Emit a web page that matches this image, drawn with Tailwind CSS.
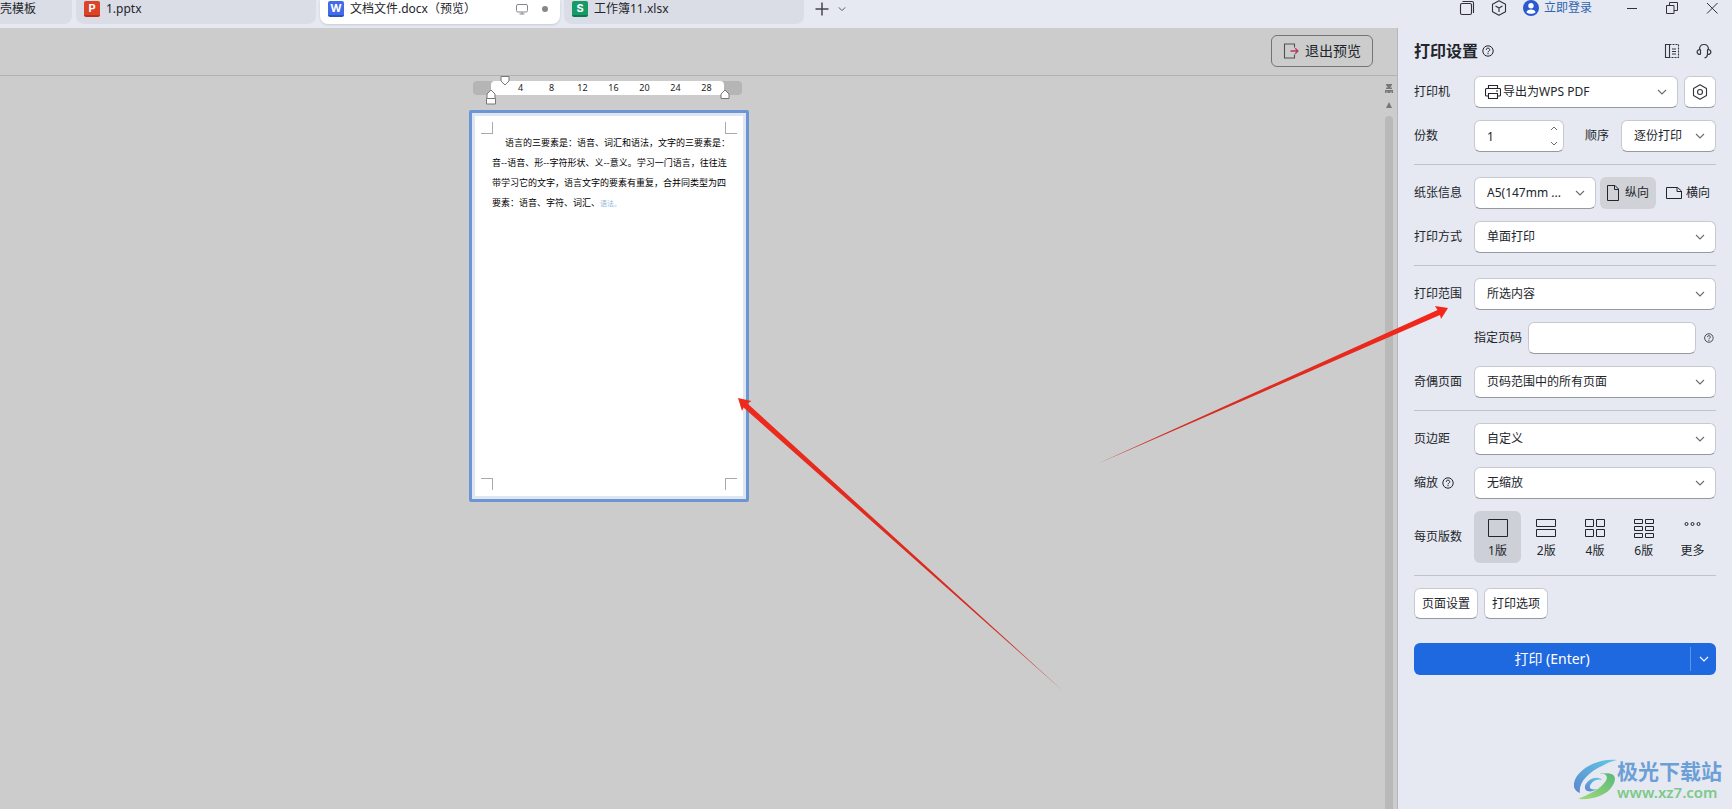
<!DOCTYPE html>
<html lang="zh-CN">
<head>
<meta charset="utf-8">
<meta name="viewport" content="width=device-width, initial-scale=1">
<title>打印预览</title>
<script src="https://cdn.jsdelivr.net/npm/@tailwindcss/browser@4"></script>
</head>
<body class="relative flex h-screen flex-col overflow-hidden bg-[#e6e9f1] font-['Noto_Sans','Noto_Sans_CJK_SC',sans-serif] text-xs text-[#22252b]">

<svg class="hidden">
  <symbol id="chev" viewBox="0 0 10 6"><path d="M1 1l4 4 4-4" fill="none" stroke="currentColor" stroke-width="1.1"/></symbol>
  <symbol id="help" viewBox="0 0 12 12"><circle cx="6" cy="6" r="5.2" fill="none" stroke="currentColor"/><path d="M4.300 4.800a1.700 1.700 0 1 1 2.500 1.500c-.6.3-.8.6-.8 1.100" fill="none" stroke="currentColor"/><path d="M5.400 8.200h1.200v1.100H5.400z" fill="currentColor"/></symbol>
</svg>

<header class="flex h-7 shrink-0 items-start justify-between">
  <nav class="flex gap-1" aria-label="文档标签">
    <a href="#" class="flex h-6 w-[72px] items-center rounded-br-lg bg-[#dadde5] pb-1.5 whitespace-nowrap">壳模板</a>
    <a href="#" class="flex h-6 w-60 items-center gap-1.5 rounded-b-lg bg-[#dadde5] pb-1.5 pl-2">
      <span class="flex size-4 items-center justify-center rounded-xs border-b-2 border-[#b8331b] bg-[#dc4327] font-['Inter',sans-serif] text-[11px] font-bold text-white">P</span>1.pptx</a>
    <a href="#" class="flex h-6 w-60 items-center gap-1.5 rounded-b-lg bg-white pr-3 pb-1.5 pl-2 shadow-sm">
      <span class="flex size-4 items-center justify-center rounded-xs border-b-2 border-[#2b52c4] bg-[#416be8] font-['Inter',sans-serif] text-[11px] font-bold text-white">W</span>
      <span class="grow whitespace-nowrap">文档文件.docx（预览）</span>
      <svg class="mr-2 h-3 w-3" viewBox="0 0 12 12" fill="none" stroke="#85878c"><rect x=".5" y="1.5" width="11" height="7.5" rx="1.5"/><path d="M3.500 11h5M6 9v2"/></svg>
      <span class="size-1.5 rounded-full bg-[#85878c]"></span></a>
    <a href="#" class="flex h-6 w-60 items-center gap-1.5 rounded-b-lg bg-[#dadde5] pb-1.5 pl-2">
      <span class="flex size-4 items-center justify-center rounded-xs border-b-2 border-[#0c7a4f] bg-[#169a68] font-['Inter',sans-serif] text-[11px] font-bold text-white">S</span>工作簿11.xlsx</a>
    <div class="flex h-[18px] items-center gap-2 pl-1.5">
      <button aria-label="新建"><svg class="size-4" viewBox="0 0 16 16" stroke="#44464b" stroke-width="1.5"><path d="M8 1.500v13M1.500 8h13"/></svg></button>
      <button aria-label="标签列表"><svg class="h-1.5 w-2 text-[#44464b]"><use href="#chev"/></svg></button>
    </div>
  </nav>
  <div class="flex h-4 items-center pr-3 text-[#303238]">
    <button class="mr-4" aria-label="窗口"><svg class="size-4" viewBox="0 0 16 16" fill="none" stroke="currentColor" stroke-width="1.1"><rect x="1.5" y="3.5" width="11" height="11" rx="1.5"/><path d="M3.500 1.500H13a1.500 1.500 0 0 1 1.500 1.500V13"/></svg></button>
    <button class="mr-4" aria-label="应用"><svg class="size-4" viewBox="0 0 16 16" fill="none" stroke="currentColor" stroke-width="1.1" stroke-linejoin="round"><path d="M8 .8l6.500 3.500v7.500L8 15.300l-6.500-3.500V4.300zM4.500 6L8 8l3.500-2M8 8v4"/></svg></button>
    <button class="mr-7 flex items-center gap-[5px] whitespace-nowrap text-[#2f66b0]">
      <svg class="size-4" viewBox="0 0 16 16"><circle cx="8" cy="8" r="8" fill="#2a58cf"/><circle cx="8" cy="5.800" r="2.700" fill="#fff"/><path d="M3.500 12.500c0-2 2-3 4.500-3s4.500 1 4.500 3c-2.500 1.800-6.500 1.800-9 0z" fill="#fff"/></svg>立即登录</button>
    <button class="mr-6 ml-1" aria-label="最小化"><svg class="size-4" viewBox="0 0 16 16" stroke="currentColor"><path d="M3 8.500h10"/></svg></button>
    <button class="mr-6" aria-label="还原"><svg class="size-4" viewBox="0 0 16 16" fill="none" stroke="currentColor"><path d="M2.500 5.500h7.500v8H2.500zM5.500 5.500v-3h8v8H10"/></svg></button>
    <button aria-label="关闭"><svg class="size-4" viewBox="0 0 16 16" fill="none" stroke="currentColor"><path d="M3 3l10.500 10.500M13.500 3L3 13.500"/></svg></button>
  </div>
</header>

<div class="flex min-h-0 grow">
  <main class="flex min-w-0 grow flex-col border-r border-[#b4b7bd] bg-[#ccc]">
    <div class="flex h-12 shrink-0 items-center justify-end border-b border-[#b2b2b2] pr-6 pb-1">
      <button class="mt-0.5 flex h-8 w-[102px] items-center justify-center gap-1.5 rounded-md border border-[#737476] text-sm whitespace-nowrap">
        <svg class="size-4" viewBox="0 0 16 16" fill="none" stroke-width="1.100"><path d="M11.500 4.500v-3.500h-10v14h10v-3.500" stroke="#4b5350"/><path d="M7.500 8h7.500M12.200 5.200L15 8l-2.800 2.800" stroke="#b83a5e" stroke-width="1.300"/></svg>退出预览</button>
    </div>
    <div class="flex min-h-0 grow">
      <div class="grow pt-[5px] pl-[469px]">
        <!-- 标尺 -->
        <div class="relative ml-1 flex h-3.5 w-[269px] rounded-sm bg-[#b5b5b5] px-[18px]">
          <div class="flex grow items-center rounded-sm bg-white pb-px pl-[14px] text-[9px] leading-none text-[#222]">
            <span class="w-[31px] text-center">4</span><span class="w-[31px] text-center">8</span><span class="w-[31px] text-center">12</span><span class="w-[31px] text-center">16</span><span class="w-[31px] text-center">20</span><span class="w-[31px] text-center">24</span><span class="w-[31px] text-center">28</span>
          </div>
          <svg class="absolute -top-[5px] left-[27px] h-2.5 w-2.5" viewBox="0 0 10 10" fill="#fff" stroke="#777"><path d="M1 .5h8v4.500L5 9 1 5z"/></svg>
          <svg class="absolute top-2 left-[13px] h-4 w-2.5" viewBox="0 0 10 16" fill="#fff" stroke="#777"><path d="M5 1l4 4v4.500H1V5zM.500 9.500h9v5.500h-9z"/></svg>
          <svg class="absolute top-2 left-[247px] h-2.5 w-2.5" viewBox="0 0 10 10" fill="#fff" stroke="#777"><path d="M5 1l4 4v4.500H1V5z"/></svg>
        </div>
        <!-- 页面 -->
        <article class="mt-[15px] flex h-[392px] w-[280px] flex-col justify-between rounded-xs border-3 border-[#6c95d6] bg-white p-[9px] ring-3 ring-[#e0e6f0] ring-inset">
          <div class="flex justify-between">
            <i class="h-3 w-3 border-r border-b border-[#aaa]"></i><i class="h-3 w-3 border-b border-l border-[#aaa]"></i>
          </div>
          <p class="-mt-px mb-auto ml-[11px] indent-[13px] font-['Noto_Sans_CJK_SC',sans-serif] text-[9px] leading-5 whitespace-nowrap text-black">语言的三要素是：语音、词汇和语法，文字的三要素是：<br>音--语音、形--字符形状、义--意义。学习一门语言，往往连<br>带学习它的文字，语言文字的要素有重复，合并同类型为四<br>要素：语音、字符、词汇、<span class="text-[7px] text-[#8fb8da]">语法。</span></p>
          <div class="flex justify-between">
            <i class="h-3 w-3 border-t border-r border-[#aaa]"></i><i class="h-3 w-3 border-t border-l border-[#aaa]"></i>
          </div>
        </article>
      </div>
      <div class="mr-1 flex w-2 shrink-0 flex-col items-center pt-2">
        <svg class="h-2.5 w-2" viewBox="0 0 8 10" fill="#777"><path d="M1 0h6v1L5 3.500h2V5H1V3.500h2L1 1zM0 6h8v3H6.500V7.500h-1V9h-3V7.500h-1V9H0z"/></svg>
        <svg class="mt-2 h-1.5 w-1.5" viewBox="0 0 6 6" fill="#777"><path d="M3 0l3 6H0z"/></svg>
        <div class="mt-2 w-2 grow rounded-t-full bg-[#b9b9b9]"></div>
      </div>
    </div>
  </main>

  <aside class="flex w-[334px] shrink-0 flex-col pr-4 pl-4">
    <div class="flex h-12 items-center gap-1 pb-0.5">
      <h1 class="text-base font-semibold">打印设置</h1>
      <svg class="size-3"><use href="#help"/></svg>
      <button class="mr-3 ml-auto" aria-label="布局"><svg class="size-4" viewBox="0 0 16 16" fill="none" stroke="#33363c" stroke-width="1.100"><path d="M5.500 1.500h-4v13h4zM8 6h4M8 8.500h4M8 11h4"/><path d="M5.500 1.500h9v13h-9" stroke-dasharray="2 1"/></svg></button>
      <button class="mr-1" aria-label="客服"><svg class="size-4" viewBox="0 0 16 16" fill="none" stroke="#33363c" stroke-width="1.200"><path d="M4.500 6.500v5M4.500 6.500C0 6.500 0 11.500 4.500 11.500M3.500 6.500C3.500 3 5.500 1.500 8 1.500s4.500 1.500 4.500 5M11.500 6.500v5M11.500 6.500c4.500 0 4.500 5 0 5-.2 2-1 3-3 3.500"/></svg></button>
    </div>

    <form class="flex flex-col gap-3">
      <div class="flex h-8 items-center">
        <label for="printer" class="w-[60px] shrink-0">打印机</label>
        <div class="relative grow">
          <select id="printer" class="h-8 w-full appearance-none rounded-md border border-[#c6c9d1] border-b-[#96999f] bg-white pl-7"><option>导出为WPS PDF</option></select>
          <svg class="pointer-events-none absolute top-2 left-[11px] size-4" viewBox="0 0 16 16" fill="none" stroke="#22252b" stroke-width="1.100"><path d="M3.500 4.500v-3h9v3M3.500 12h-2a1 1 0 0 1-1-1V5.500a1 1 0 0 1 1-1h13a1 1 0 0 1 1 1V11a1 1 0 0 1-1 1h-2M3.500 9.500h9v5h-9zM11 7h2"/></svg>
          <svg class="pointer-events-none absolute top-[13px] right-[11px] h-1.5 w-2.5 text-[#6a6c70]"><use href="#chev"/></svg>
        </div>
        <button type="button" aria-label="打印机属性" class="ml-1.5 flex size-8 items-center justify-center rounded-md border border-[#c6c9d1] border-b-[#96999f] bg-white"><svg class="size-4" viewBox="0 0 16 16" fill="none" stroke="#33363c" stroke-width="1.100" stroke-linejoin="round"><path d="M8 .8l6.500 3.700v7L8 15.200l-6.500-3.700v-7z"/><circle cx="8" cy="8" r="2.500"/></svg></button>
      </div>

      <div class="flex h-8 items-center">
        <label for="copies" class="w-[60px] shrink-0">份数</label>
        <div class="relative w-[90px]">
          <input id="copies" type="text" value="1" class="h-8 w-full rounded-md border border-[#c6c9d1] border-b-[#96999f] bg-white pl-3">
          <svg class="pointer-events-none absolute top-1.5 right-1.5 h-5 w-2" viewBox="0 0 8 20" fill="none" stroke="#6a6c70"><path d="M1 4l3-3 3 3M1 16l3 3 3-3"/></svg>
        </div>
        <label for="order" class="ml-[21px] w-9 shrink-0">顺序</label>
        <div class="relative grow">
          <select id="order" class="h-8 w-full appearance-none rounded-md border border-[#c6c9d1] border-b-[#96999f] bg-white pl-3"><option>逐份打印</option></select>
          <svg class="pointer-events-none absolute top-[13px] right-[11px] h-1.5 w-2.5 text-[#6a6c70]"><use href="#chev"/></svg>
        </div>
      </div>

      <hr class="border-[#c0c3cb]">

      <div class="flex h-8 items-center">
        <label for="paper" class="w-[60px] shrink-0">纸张信息</label>
        <div class="relative grow">
          <select id="paper" class="h-8 w-full appearance-none rounded-md border border-[#c6c9d1] border-b-[#96999f] bg-white pl-3"><option>A5(147mm ...</option></select>
          <svg class="pointer-events-none absolute top-[13px] right-[11px] h-1.5 w-2.5 text-[#6a6c70]"><use href="#chev"/></svg>
        </div>
        <button type="button" class="ml-1 flex h-8 w-14 items-center justify-center gap-1.5 rounded-md bg-[#d0d2d8] whitespace-nowrap"><svg class="h-4 w-3" viewBox="0 0 12 16" fill="none" stroke="#22252b"><path d="M.500.500h7.500l3.500 3.500v11.500H.500zM7.500.500v4h4"/></svg>纵向</button>
        <button type="button" class="flex h-8 w-[60px] items-center justify-end gap-1 whitespace-nowrap pr-1.5"><svg class="h-3 w-4" viewBox="0 0 16 12" fill="none" stroke="#22252b"><path d="M.500.500h11l4 3.500v7.500H.500zM11 .500v4h4.500"/></svg>横向</button>
      </div>

      <div class="flex h-8 items-center">
        <label for="duplex" class="w-[60px] shrink-0">打印方式</label>
        <div class="relative grow">
          <select id="duplex" class="h-8 w-full appearance-none rounded-md border border-[#c6c9d1] border-b-[#96999f] bg-white pl-3"><option>单面打印</option></select>
          <svg class="pointer-events-none absolute top-[13px] right-[11px] h-1.5 w-2.5 text-[#6a6c70]"><use href="#chev"/></svg>
        </div>
      </div>

      <hr class="border-[#c0c3cb]">

      <div class="flex h-8 items-center">
        <label for="range" class="w-[60px] shrink-0">打印范围</label>
        <div class="relative grow">
          <select id="range" class="h-8 w-full appearance-none rounded-md border border-[#c6c9d1] border-b-[#96999f] bg-white pl-3"><option>所选内容</option></select>
          <svg class="pointer-events-none absolute top-[13px] right-[11px] h-1.5 w-2.5 text-[#6a6c70]"><use href="#chev"/></svg>
        </div>
      </div>

      <div class="flex h-8 items-center pl-[60px]">
        <label for="pages" class="w-[54px] shrink-0">指定页码</label>
        <input id="pages" type="text" class="h-8 min-w-0 grow rounded-md border border-[#c6c9d1] border-b-[#96999f] bg-white px-3">
        <svg class="mr-0.5 ml-2 size-3"><use href="#help"/></svg>
      </div>

      <div class="flex h-8 items-center">
        <label for="parity" class="w-[60px] shrink-0">奇偶页面</label>
        <div class="relative grow">
          <select id="parity" class="h-8 w-full appearance-none rounded-md border border-[#c6c9d1] border-b-[#96999f] bg-white pl-3"><option>页码范围中的所有页面</option></select>
          <svg class="pointer-events-none absolute top-[13px] right-[11px] h-1.5 w-2.5 text-[#6a6c70]"><use href="#chev"/></svg>
        </div>
      </div>

      <hr class="border-[#c0c3cb]">

      <div class="flex h-8 items-center">
        <label for="margin" class="w-[60px] shrink-0">页边距</label>
        <div class="relative grow">
          <select id="margin" class="h-8 w-full appearance-none rounded-md border border-[#c6c9d1] border-b-[#96999f] bg-white pl-3"><option>自定义</option></select>
          <svg class="pointer-events-none absolute top-[13px] right-[11px] h-1.5 w-2.5 text-[#6a6c70]"><use href="#chev"/></svg>
        </div>
      </div>

      <div class="flex h-8 items-center">
        <label for="scale" class="flex w-[60px] shrink-0 items-center gap-1">缩放<svg class="size-3"><use href="#help"/></svg></label>
        <div class="relative grow">
          <select id="scale" class="h-8 w-full appearance-none rounded-md border border-[#c6c9d1] border-b-[#96999f] bg-white pl-3"><option>无缩放</option></select>
          <svg class="pointer-events-none absolute top-[13px] right-[11px] h-1.5 w-2.5 text-[#6a6c70]"><use href="#chev"/></svg>
        </div>
      </div>

      <div class="flex h-[52px] items-center">
        <span class="w-[60px] shrink-0">每页版数</span>
        <div class="flex grow justify-between">
          <button type="button" class="flex h-[52px] w-[47px] flex-col items-center gap-1 rounded-md bg-[#cdd0d7] pt-2"><svg class="h-5 w-5" viewBox="0 0 20 20" fill="none" stroke="#22252b"><path d="M.500.500h19v17H.500z"/></svg>1版</button>
          <button type="button" class="flex h-[52px] w-[47px] flex-col items-center gap-1 pt-2"><svg class="h-5 w-5" viewBox="0 0 20 20" fill="none" stroke="#22252b"><path d="M.500.500h19v7H.500zM.500 10.500h19v7H.500z"/></svg>2版</button>
          <button type="button" class="flex h-[52px] w-[47px] flex-col items-center gap-1 pt-2"><svg class="h-5 w-5" viewBox="0 0 20 20" fill="none" stroke="#22252b"><path d="M.500.500h8v7h-8zM11.500.500h8v7h-8zM.500 10.500h8v7h-8zM11.500 10.500h8v7h-8z"/></svg>4版</button>
          <button type="button" class="flex h-[52px] w-[47px] flex-col items-center gap-1 pt-2"><svg class="h-5 w-5" viewBox="0 0 20 20" fill="none" stroke="#22252b"><path d="M.500.500h8v4h-8zM11.500.500h8v4h-8zM.500 7.500h8v4h-8zM11.500 7.500h8v4h-8zM.500 14.500h8v4h-8zM11.500 14.500h8v4h-8z"/></svg>6版</button>
          <button type="button" class="flex h-[52px] w-[47px] flex-col items-center gap-1 pt-2"><svg class="h-5 w-5" viewBox="0 0 20 20" fill="none" stroke="#22252b"><circle cx="3.500" cy="5" r="1.500"/><circle cx="9.500" cy="5" r="1.500"/><circle cx="15.500" cy="5" r="1.500"/></svg>更多</button>
        </div>
      </div>

      <hr class="border-[#c0c3cb]">

      <div class="flex gap-1.5">
        <button type="button" class="h-[31px] w-16 rounded-md border border-[#c6c9d1] border-b-[#96999f] bg-white whitespace-nowrap">页面设置</button>
        <button type="button" class="h-[31px] w-16 rounded-md border border-[#c6c9d1] border-b-[#96999f] bg-white whitespace-nowrap">打印选项</button>
      </div>

      <div class="mt-3 flex h-8 items-center overflow-hidden rounded-md bg-[#1e68e0] text-sm text-white">
        <button type="submit" class="h-full grow">打印 (Enter)</button>
        <button type="button" aria-label="更多打印方式" class="flex h-6 w-[26px] items-center justify-center border-l border-[#5c93ec]"><svg class="h-1.5 w-2.5"><use href="#chev"/></svg></button>
      </div>
    </form>
  </aside>
</div>

<!-- 标注箭头 -->
<svg class="pointer-events-none absolute top-0 left-0 h-[809px] w-[1732px] max-w-none" viewBox="0 0 1732 809">
  <defs>
    <linearGradient id="a1" gradientUnits="userSpaceOnUse" x1="738" y1="398" x2="1061" y2="689"><stop offset="0" stop-color="#ee2a1c"/><stop offset="1" stop-color="#cc2d22"/></linearGradient>
    <linearGradient id="a2" gradientUnits="userSpaceOnUse" x1="1448" y1="308" x2="1097" y2="464"><stop offset="0" stop-color="#f5261a"/><stop offset="1" stop-color="#c93025"/></linearGradient>
  </defs>
  <path fill="url(#a1)" d="M738 398L751.500 401L747.500 403.500L1063 691L743.500 407.500L742 411Z"/>
  <path fill="url(#a2)" d="M1448 308L1435 306L1437.500 310L1097 464L1440 315L1441 319Z"/>
</svg>

<!-- 站点水印 -->
<div class="pointer-events-none absolute right-2.5 bottom-2 flex items-center whitespace-nowrap">
  <svg class="h-[42px] w-[43px]" viewBox="0 0 43 42">
    <defs>
      <linearGradient id="w1" x1="1" y1="0" x2="0" y2="1"><stop offset="0" stop-color="#62c9e8"/><stop offset="1" stop-color="#5b87cd"/></linearGradient>
      <linearGradient id="w2" x1="1" y1="0" x2="0" y2="1"><stop offset="0" stop-color="#58b978"/><stop offset="1" stop-color="#a5d879"/></linearGradient>
    </defs>
    <path fill="url(#w1)" d="M43 1C24-1 3 10 0 24c-1 4 1 8 6 10C4 24 14 13 30 6c3-2 8-4 13-5z"/>
    <path fill="url(#w1)" d="M28 21c-4-5-15-1-17 6-1 6 6 7 12 3-4 1-8 0-7-3 1-4 7-8 12-6z"/>
    <path fill="url(#w2)" d="M26 15c6-1 9 3 5 8C26 30 16 35 4 40c14 1 29-3 35-14 5-9 0-14-13-11z"/>
  </svg>
  <div class="flex flex-col">
    <span class="text-[21px] leading-6 font-bold text-[#6b9fd6]">极光下载站</span>
    <span class="font-['Noto_Sans',sans-serif] text-[15px] leading-[18px] font-semibold text-[#7cc98a]">www.xz7.com</span>
  </div>
</div>
</body>
</html>
